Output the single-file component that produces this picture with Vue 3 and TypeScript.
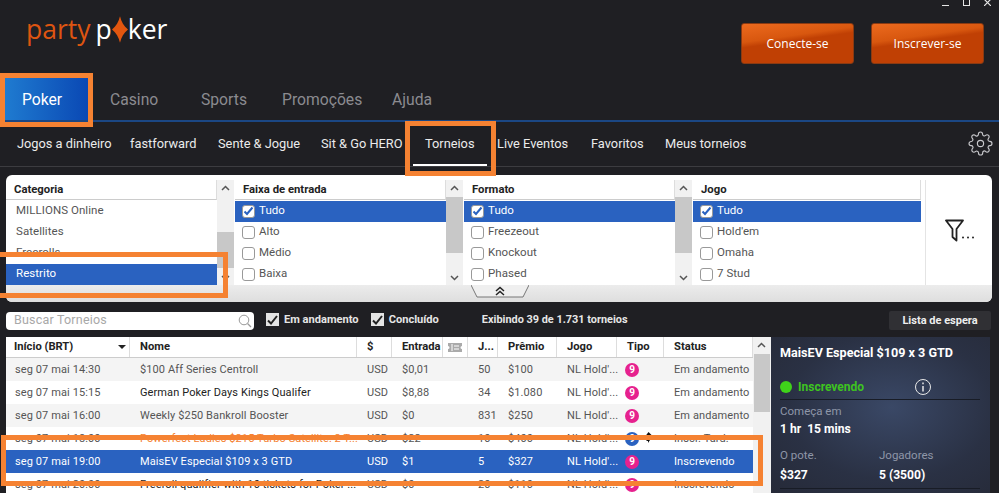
<template>
  <div class="app">
    <!-- Top bar -->
    <header class="top">
      <div class="logo">
        <span class="party">party</span><span class="poker">p</span>
        <svg class="logo-diamond" width="16" height="27" viewBox="0 0 17 28">
          <path d="M8.5 0C10 6 12.5 10.500 17 14C12.500 17.500 10 22 8.500 28C7 22 4.500 17.500 0 14C4.500 10.500 7 6 8.500 0Z" fill="#e2560f" />
        </svg>
        <span class="poker">ker</span>
      </div>
      <div class="top-right">
        <div class="win-controls">
          <i class="win-min"></i>
          <i class="win-max"></i>
          <svg width="7" height="7" viewBox="0 0 7 7"><path d="M0 0L7 7M7 0L0 7" stroke="#e6e6e6" stroke-width="1.200" /></svg>
        </div>
        <div class="auth">
          <button class="auth-btn">Conecte-se</button>
          <button class="auth-btn">Inscrever-se</button>
        </div>
      </div>
    </header>

    <!-- Main tabs -->
    <nav class="tabs">
      <a v-for="t in mainTabs" :key="t" class="tab" :class="{ active: t === 'Poker' }">{{ t }}</a>
    </nav>

    <!-- Sub tabs -->
    <nav class="subnav">
      <a v-for="t in subTabs" :key="t" class="sub" :class="{ active: t === 'Torneios' }">{{ t }}</a>
      <svg class="gear" width="25" height="25" viewBox="0 0 24 24" fill="none" stroke="#c8c8cc" stroke-width="1.100">
        <circle cx="12" cy="12" r="3" />
        <path d="M19.400 15a1.650 1.650 0 0 0 .33 1.820l.06.06a2 2 0 0 1 0 2.830 2 2 0 0 1-2.830 0l-.06-.06a1.650 1.650 0 0 0-1.820-.33 1.650 1.650 0 0 0-1 1.510V21a2 2 0 0 1-2 2 2 2 0 0 1-2-2v-.09A1.650 1.650 0 0 0 9 19.400a1.650 1.650 0 0 0-1.820.33l-.06.06a2 2 0 0 1-2.830 0 2 2 0 0 1 0-2.830l.06-.06a1.650 1.650 0 0 0 .33-1.820 1.650 1.650 0 0 0-1.510-1H3a2 2 0 0 1-2-2 2 2 0 0 1 2-2h.09A1.650 1.650 0 0 0 4.600 9a1.650 1.650 0 0 0-.33-1.820l-.06-.06a2 2 0 0 1 0-2.830 2 2 0 0 1 2.830 0l.06.06a1.650 1.650 0 0 0 1.820.33H9a1.650 1.650 0 0 0 1-1.510V3a2 2 0 0 1 2-2 2 2 0 0 1 2 2v.09a1.650 1.650 0 0 0 1 1.510 1.650 1.650 0 0 0 1.820-.33l.06-.06a2 2 0 0 1 2.830 0 2 2 0 0 1 0 2.830l-.06.06a1.650 1.650 0 0 0-.33 1.820V9a1.650 1.650 0 0 0 1.510 1H21a2 2 0 0 1 2 2 2 2 0 0 1-2 2h-.09a1.650 1.650 0 0 0-1.510 1z" />
      </svg>
    </nav>

    <!-- Filters -->
    <section class="filters">
      <div class="filter-body">
        <div v-for="f in filters" :key="f.title" class="filter-col" :class="{ wide: !f.thumb }">
          <div class="filter-list">
            <div class="filter-head">{{ f.title }}</div>
            <div
              v-for="item in f.items"
              :key="item"
              class="filter-row"
              :class="{ selected: item === f.selected, plain: !f.check }"
            >
              <span v-if="f.check" class="check" :class="{ on: item === f.selected }">
                <svg v-if="item === f.selected" width="11" height="10" viewBox="0 0 11 10">
                  <path d="M1.500 5.500L4 8L9.500 1.500" fill="none" stroke="#2a62c0" stroke-width="2" />
                </svg>
              </span>
              {{ item }}
            </div>
          </div>
          <div v-if="f.thumb" class="scroll filter-scroll">
            <svg class="arrow" width="9" height="6" viewBox="0 0 9 6"><path d="M1 5L4.500 1.500L8 5" fill="none" stroke="#555" stroke-width="1.500" /></svg>
            <div class="thumb" :style="{ top: f.thumb[0] + 'px', height: f.thumb[1] + 'px' }"></div>
            <svg class="arrow down" width="9" height="6" viewBox="0 0 9 6"><path d="M1 1L4.500 4.500L8 1" fill="none" stroke="#555" stroke-width="1.500" /></svg>
          </div>
        </div>
        <div class="filter-icon">
          <svg width="31" height="23" viewBox="0 0 31 23">
            <path d="M1 1.500H18L11.500 10V21.500L7.500 18V10Z" fill="none" stroke="#222" stroke-width="1.800" stroke-linejoin="round" />
            <circle cx="18" cy="18.500" r="1" fill="#222" /><circle cx="23" cy="18.500" r="1" fill="#222" /><circle cx="28" cy="18.500" r="1" fill="#222" />
          </svg>
        </div>
      </div>
      <div class="filter-strip">
        <svg class="collapse" width="58" height="13" viewBox="0 0 58 13">
          <path d="M0 0L6 12H52L58 0" fill="#efefef" stroke="#777" stroke-width="1" />
          <path d="M25 6L29 2.500L33 6M25 10L29 6.500L33 10" fill="none" stroke="#222" stroke-width="1.500" />
        </svg>
      </div>
    </section>

    <!-- Search and toggles -->
    <div class="toolbar">
      <div class="search">
        <span>Buscar Torneios</span>
        <svg width="14" height="14" viewBox="0 0 14 14"><circle cx="6" cy="6" r="4.800" fill="none" stroke="#999" stroke-width="1" /><path d="M9.500 9.500L13 13" stroke="#999" stroke-width="1.200" /></svg>
      </div>
      <label class="toggle toggle-first"><span class="tick"><svg width="11" height="10" viewBox="0 0 11 10"><path d="M1 5.500L4 8.500L10 1" fill="none" stroke="#222" stroke-width="2" /></svg></span>Em andamento</label>
      <label class="toggle toggle-second"><span class="tick"><svg width="11" height="10" viewBox="0 0 11 10"><path d="M1 5.500L4 8.500L10 1" fill="none" stroke="#222" stroke-width="2" /></svg></span>Concluído</label>
      <span class="count">Exibindo 39 de 1.731 torneios</span>
      <button class="waitlist">Lista de espera</button>
    </div>

    <!-- Tournament table and detail panel -->
    <div class="main">
      <div class="table">
        <div class="row head">
          <div class="cell first">Início (BRT)<i class="sort"></i></div>
          <div class="cell">Nome</div>
          <div class="cell">$</div>
          <div class="cell">Entrada</div>
          <div class="cell ticket">
            <svg width="14" height="9" viewBox="0 0 14 9"><path d="M0 0H14V3A1.500 1.500 0 0 0 14 6V9H0V6A1.500 1.500 0 0 0 0 3Z" fill="#aaa" /><path d="M4 1V8M6 3H11M6 6H11" stroke="#fff" stroke-width="1" /></svg>
          </div>
          <div class="cell">J...</div>
          <div class="cell">Prêmio</div>
          <div class="cell">Jogo</div>
          <div class="cell">Tipo</div>
          <div class="cell">Status</div>
        </div>
        <div
          v-for="(r, i) in rows"
          :key="i"
          class="row"
          :class="{ odd: i % 2 === 0, selected: r.selected, dark: r.dark, late: r.late }"
        >
          <div class="cell first">{{ r.start }}</div>
          <div class="cell name">{{ r.name }}</div>
          <div class="cell">USD</div>
          <div class="cell">{{ r.entry }}</div>
          <div class="cell"></div>
          <div class="cell">{{ r.players }}</div>
          <div class="cell">{{ r.prize }}</div>
          <div class="cell">NL Hold'...</div>
          <div class="cell">
            <span class="badge" :class="{ blue: r.late }">9</span>
            <svg v-if="r.late" class="cursor" width="8" height="11" viewBox="0 0 8 11"><path d="M3.500 0L0.500 4H3V7L1 9H3V11L5 8V4H7.500Z" fill="#111" /></svg>
          </div>
          <div class="cell">{{ r.status }}</div>
        </div>
      </div>
      <div class="scroll table-scroll">
        <svg class="arrow" width="9" height="6" viewBox="0 0 9 6"><path d="M1 5L4.500 1.500L8 5" fill="none" stroke="#555" stroke-width="1.500" /></svg>
        <div class="thumb" style="top: 17px; height: 58px"></div>
      </div>

      <aside class="detail">
        <h3>MaisEV Especial $109 x 3 GTD</h3>
        <div class="state">
          <i class="dot"></i><span>Inscrevendo</span>
          <svg width="18" height="18" viewBox="0 0 18 18" fill="none" stroke="#e8e8e8">
            <circle cx="9" cy="9" r="7.500" stroke-width="1" />
            <path d="M9 8V13.500" stroke-width="1.500" />
            <path d="M9 4.500V6.200" stroke-width="1.500" />
          </svg>
        </div>
        <div class="label">Começa em</div>
        <div class="value">1 hr&nbsp; 15 mins</div>
        <div class="stats">
          <div>
            <div class="label">O pote.</div>
            <div class="value">$327</div>
          </div>
          <div>
            <div class="label">Jogadores</div>
            <div class="value">5 (3500)</div>
          </div>
        </div>
      </aside>
    </div>

    <!-- Orange annotations drawn over the screenshot -->
    <i class="mark mark-poker"></i>
    <i class="mark mark-torneios"></i>
    <i class="mark mark-restrito"></i>
    <i class="mark mark-row"></i>
  </div>
</template>

<script setup lang="ts">
interface FilterList {
  title: string
  items: string[]
  selected: string
  check: boolean
  thumb?: [number, number]
}

interface TourneyRow {
  start: string
  name: string
  entry: string
  players: string
  prize: string
  status: string
  selected?: boolean
  dark?: boolean
  late?: boolean
}

const mainTabs = ['Poker', 'Casino', 'Sports', 'Promoções', 'Ajuda']
const subTabs = [
  'Jogos a dinheiro',
  'fastforward',
  'Sente & Jogue',
  'Sit & Go HERO',
  'Torneios',
  'Live Eventos',
  'Favoritos',
  'Meus torneios',
]

const filters: FilterList[] = [
  { title: 'Categoria', items: ['MILLIONS Online', 'Satellites', 'Freerolls', 'Restrito'], selected: 'Restrito', check: false, thumb: [52, 36] },
  { title: 'Faixa de entrada', items: ['Tudo', 'Alto', 'Médio', 'Baixa'], selected: 'Tudo', check: true, thumb: [17, 56] },
  { title: 'Formato', items: ['Tudo', 'Freezeout', 'Knockout', 'Phased'], selected: 'Tudo', check: true, thumb: [17, 56] },
  { title: 'Jogo', items: ['Tudo', "Hold'em", 'Omaha', '7 Stud'], selected: 'Tudo', check: true },
]

const rows: TourneyRow[] = [
  { start: 'seg 07 mai 14:30', name: '$100 Aff Series Centroll', entry: '$0,01', players: '50', prize: '$100', status: 'Em andamento' },
  { start: 'seg 07 mai 15:15', name: 'German Poker Days Kings Qualifer', entry: '$8,88', players: '34', prize: '$1.080', status: 'Em andamento', dark: true },
  { start: 'seg 07 mai 16:00', name: 'Weekly $250 Bankroll Booster', entry: '$0', players: '831', prize: '$250', status: 'Em andamento' },
  { start: 'seg 07 mai 18:00', name: 'Powerfest Ladies $215 Turbo Satellite: 2 T...', entry: '$22', players: '10', prize: '$400', status: 'Inscr. Tard.', late: true },
  { start: 'seg 07 mai 19:00', name: 'MaisEV Especial $109 x 3 GTD', entry: '$1', players: '5', prize: '$327', status: 'Inscrevendo', selected: true },
  { start: 'seg 07 mai 20:00', name: 'Freeroll qualifier with 10 tickets for Poker ...', entry: '$0', players: '20', prize: '$110', status: 'Inscrevendo', dark: true },
]
</script>

<style>
html,
body {
  margin: 0;
  background: #1f1f23;
}
</style>

<style scoped>
.app {
  position: relative;
  width: 999px;
  height: 493px;
  overflow: hidden;
  background: #1f1f23;
  font-family: Roboto, "Liberation Sans", sans-serif;
}

/* top bar */
.top {
  display: flex;
  justify-content: space-between;
  height: 73px;
}
.logo {
  display: flex;
  align-items: center;
  height: 28px;
  margin: 15px 0 0 26px;
  font-family: "Open Sans", sans-serif;
  font-size: 26.500px;
  line-height: 28px;
}
.party {
  color: #de5511;
  margin-right: 5px;
}
.poker {
  color: #fff;
}
.logo-diamond {
  margin: 1px 0 0 0;
}
.top-right {
  display: flex;
  flex-direction: column;
  align-items: flex-end;
}
.win-controls {
  display: flex;
  align-items: flex-end;
  gap: 14px;
  height: 6px;
  margin: 0 8px 17px 0;
}
.win-min {
  width: 7px;
  height: 1px;
  background: #e6e6e6;
}
.win-max {
  width: 5px;
  height: 7px;
  border: 1px solid #e6e6e6;
  border-top: 0;
}
.auth {
  display: flex;
  gap: 17px;
  margin-right: 15px;
}
.auth-btn {
  width: 113px;
  height: 41px;
  padding: 0;
  border: 1px solid #8a3a12;
  border-radius: 3px;
  background: linear-gradient(172deg, #ec6a1e 0%, #d8570f 34%, #c04004 44%, #c04004 100%);
  color: #fff;
  font-family: "Open Sans", sans-serif;
  font-size: 12px;
}

/* tabs */
.tabs {
  display: grid;
  grid-template-columns: 105px 91px 81px 110px auto;
  align-items: center;
  height: 42px;
  padding: 5px 0 0 5px;
  border-bottom: 2px solid #1b4784;
}
.tab {
  padding-top: 1px;
  color: #8b8b90;
  font-size: 15.700px;
  line-height: 41px;
}
.tab.active {
  width: 83px;
  box-sizing: border-box;
  padding-right: 9px;
  color: #fff;
  text-align: center;
  background: linear-gradient(90deg, #1f7bd0, #0a48b4);
}

.subnav {
  position: relative;
  display: grid;
  grid-template-columns: 113px 88px 103px 104px 72px 94px 74px auto;
  align-items: center;
  height: 42px;
  padding: 0 0 2px 17px;
  border-bottom: 1px solid #3c3c40;
}
.sub {
  position: relative;
  color: #ebebeb;
  font-size: 12.800px;
}
.sub.active::after {
  content: "";
  position: absolute;
  left: -12px;
  right: 10px;
  bottom: -15px;
  height: 2px;
  background: #fff;
}
.gear {
  position: absolute;
  right: 6px;
  top: 9px;
}

/* filters */
.filters {
  width: 986px;
  height: 127px;
  margin: 8px 0 0 6px;
  padding-top: 5px;
  box-sizing: border-box;
  overflow: hidden;
  border-radius: 6px;
  background: #fff;
}
.filter-body {
  display: flex;
  height: 105px;
}
.filter-col {
  display: flex;
  width: 229px;
  flex: none;
}
.filter-col.wide {
  width: 232px;
}
.filter-list {
  flex: 1;
  min-width: 0;
  overflow: hidden;
}
.filter-col.wide .filter-list {
  margin-right: 4px;
}
.filter-head {
  height: 19px;
  padding-left: 8px;
  margin-bottom: 1px;
  border-right: 1px solid #ddd;
  border-bottom: 1px solid #ccc;
  color: #222;
  font-size: 11.300px;
  font-weight: 700;
  line-height: 20px;
}
.filter-row {
  display: flex;
  align-items: center;
  gap: 4px;
  height: 21px;
  box-sizing: border-box;
  padding: 0 0 3px 7px;
  color: #555;
  font-size: 11.500px;
  letter-spacing: 0.05px;
}
.filter-row.plain {
  padding-left: 10px;
}
.filter-row.selected {
  background: #2a62c0;
  color: #fff;
}
.check {
  display: flex;
  align-items: center;
  justify-content: center;
  width: 13px;
  height: 13px;
  box-sizing: border-box;
  border: 1px solid #999;
  border-radius: 3px;
  background: #fff;
  margin-top: 2px;
}
.scroll {
  position: relative;
  width: 17px;
  flex: none;
  background: #f1f1f1;
}
.filter-scroll {
  margin-right: 1px;
}
.thumb {
  position: absolute;
  left: 0;
  right: 0;
  background: #c8c8c8;
}
.arrow {
  position: absolute;
  left: 4px;
  top: 5px;
}
.arrow.down {
  top: auto;
  bottom: 4px;
}
.filter-icon {
  display: flex;
  align-items: center;
  flex: 1;
  padding: 0 0 5px 19px;
  border-left: 1px solid #e4e4e4;
}
.filter-strip {
  display: flex;
  height: 17px;
  padding-left: 465px;
  background: linear-gradient(#ececec, #dedede);
}
.collapse {
  display: block;
}

/* toolbar */
.toolbar {
  display: flex;
  align-items: center;
  height: 19px;
  margin: 9px 8px 0 6px;
}
.search {
  display: flex;
  align-items: center;
  justify-content: space-between;
  width: 248px;
  height: 18px;
  padding: 0 2px 0 8px;
  box-sizing: border-box;
  border-radius: 4px;
  background: #fff;
  color: #a8a8a8;
  font-size: 12.500px;
  letter-spacing: 0.2px;
}
.search span {
  margin-top: -3px;
}
.toggle {
  display: flex;
  align-items: center;
  gap: 5px;
  padding-bottom: 2px;
  color: #e6e6e6;
  font-size: 11.100px;
  font-weight: 700;
}
.toggle-first {
  margin-left: 12px;
}
.toggle-second {
  margin-left: 12px;
}
.tick {
  display: flex;
  align-items: center;
  justify-content: center;
  width: 13px;
  height: 13px;
  background: #e4e4e4;
}
.count {
  margin-left: 43px;
  padding-bottom: 2px;
  color: #e6e6e6;
  font-size: 10.900px;
  font-weight: 700;
}
.waitlist {
  width: 102px;
  height: 19px;
  padding: 0;
  margin-left: auto;
  border: 0;
  border-radius: 2px;
  background: #303034;
  color: #eee;
  font-family: inherit;
  font-size: 11px;
  font-weight: 700;
}

/* table */
.main {
  display: flex;
  height: 156px;
  margin: 7px 0 0 6px;
}
.table {
  width: 747px;
  flex: none;
  background: #fff;
}
.row {
  display: grid;
  grid-template-columns: 124px 227px 35px 51px 25px 30px 59px 60px 47px 89px;
  height: 23px;
  align-items: center;
  color: #555;
  font-size: 11px;
  letter-spacing: 0.1px;
}
.row.odd {
  background: #f4f4f4;
}
.row.dark .name {
  color: #222;
}
.row.late .name {
  color: #f58232;
}
.row.selected {
  background: #2a62c0;
  color: #fff;
}
.row.selected .name {
  color: #fff;
}
.row.head {
  height: 21px;
  border-bottom: 1px solid #ccc;
  box-sizing: border-box;
  background: #fff;
  color: #222;
  font-size: 11.200px;
  font-weight: 700;
  letter-spacing: 0;
}
.head .cell {
  height: 20px;
  line-height: 19px;
  border-right: 1px solid #ddd;
}
.cell {
  position: relative;
  min-width: 0;
  padding-left: 10px;
  box-sizing: border-box;
  white-space: nowrap;
}
.cell.first {
  padding-left: 9px;
}
.head .cell.first {
  padding-left: 8px;
}
.ticket {
  display: flex;
  align-items: center;
  padding-left: 5px;
}
.sort {
  position: absolute;
  right: 3px;
  top: 8px;
  border: 4px solid transparent;
  border-top: 4px solid #222;
  border-bottom: 0;
}
.badge {
  display: block;
  width: 14px;
  height: 14px;
  margin-left: -2px;
  border-radius: 50%;
  background: #e6218e;
  color: #fff;
  font-size: 10px;
  font-weight: 700;
  line-height: 14px;
  letter-spacing: 0;
  text-align: center;
}
.badge.blue {
  background: #2a62c0;
}
.cursor {
  position: absolute;
  left: 28px;
  top: 0;
}
.table-scroll {
  width: 18px;
  background: #f1f1f1;
}
.table-scroll .thumb {
  left: 1px;
  right: 1px;
}

/* detail panel */
.detail {
  width: 219px;
  padding: 7px 10px 0 9px;
  box-sizing: border-box;
  background: radial-gradient(ellipse at 55% 45%, #3a4866 0%, #2a3144 60%, #262a38 100%);
  color: #fff;
}
.detail h3 {
  margin: 0;
  font-size: 12.600px;
  font-weight: 700;
  line-height: 18px;
}
.state {
  display: flex;
  align-items: center;
  height: 23px;
  margin-top: 13px;
  padding-bottom: 1px;
  border-bottom: 1px solid #181c26;
  color: #3ec41f;
  font-size: 12px;
  font-weight: 700;
}
.state .dot {
  width: 12px;
  height: 12px;
  margin-right: 6px;
  border-radius: 50%;
  background: #3fd21a;
}
.state svg {
  margin-left: 50px;
}
.label {
  margin-top: 3px;
  color: #8e96a8;
  font-size: 11.500px;
  line-height: 17px;
}
.value {
  font-size: 12.100px;
  font-weight: 700;
  line-height: 18px;
}
.stats {
  display: grid;
  grid-template-columns: 99px auto;
  margin-top: 6px;
  padding-bottom: 4px;
  border-bottom: 1px solid #181c26;
}
.stats .value {
  margin-top: 2px;
}

/* annotations */
.mark {
  position: absolute;
  box-sizing: border-box;
  border: 5px solid #f58232;
  pointer-events: none;
}
.mark-poker {
  left: 0;
  top: 73px;
  width: 93px;
  height: 54px;
}
.mark-torneios {
  left: 405px;
  top: 121px;
  width: 91px;
  height: 55px;
}
.mark-restrito {
  left: -5px;
  top: 252px;
  width: 233px;
  height: 46px;
}
.mark-row {
  left: 1px;
  top: 435px;
  width: 762px;
  height: 51px;
}
</style>
